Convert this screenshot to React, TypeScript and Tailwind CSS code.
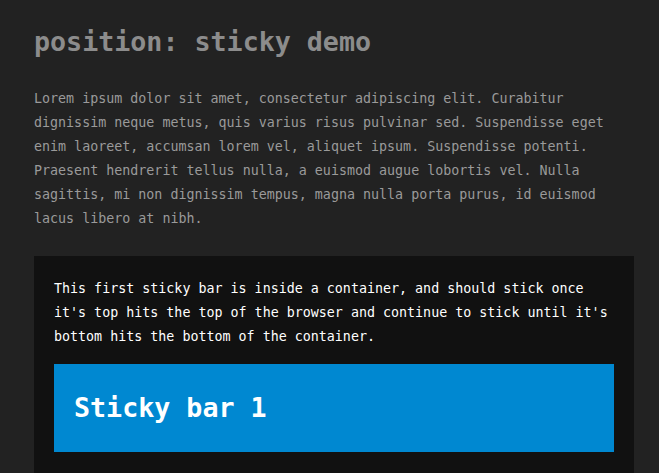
import React from 'react';

const LOREM =
  "Lorem ipsum dolor sit amet, consectetur adipiscing elit. Curabitur dignissim neque metus, quis varius risus pulvinar sed. Suspendisse eget enim laoreet, accumsan lorem vel, aliquet ipsum. Suspendisse potenti. Praesent hendrerit tellus nulla, a euismod augue lobortis vel. Nulla sagittis, mi non dignissim tempus, magna nulla porta purus, id euismod lacus libero at nibh.";

export default function App() {
  return (
    <div className="min-h-[473px] bg-[#222222] px-[34px] pt-[22px] font-['DejaVu_Sans_Mono',monospace] overflow-hidden h-[473px]">
      <div className="w-[600px]">
        <h1 className="text-[26.67px] leading-[40px] font-bold text-[#8c8c8c]">position: sticky demo</h1>

        <p className="mt-[25px] text-[13.33px] leading-[24px] text-[#9a9a9a] w-[570px]">
          {LOREM}
        </p>

        {/* container holding the first sticky bar */}
        <div className="mt-[25px] bg-[#111111] px-[20px] pt-[21px] pb-[40px]" id="sticky-container-1">
          <p className="text-[13.33px] leading-[24px] text-white">
            This first sticky bar is inside a container, and should stick once it's top hits the top of the browser and continue to stick until it's bottom hits the bottom of the container.
          </p>
          <div className="sticky top-0 mt-[15px] h-[88px] bg-[#0088d1] px-[20px] flex items-center">
            <h2 className="text-[26.67px] font-bold text-white leading-none">Sticky bar 1</h2>
          </div>
        </div>
      </div>
    </div>
  );
}
